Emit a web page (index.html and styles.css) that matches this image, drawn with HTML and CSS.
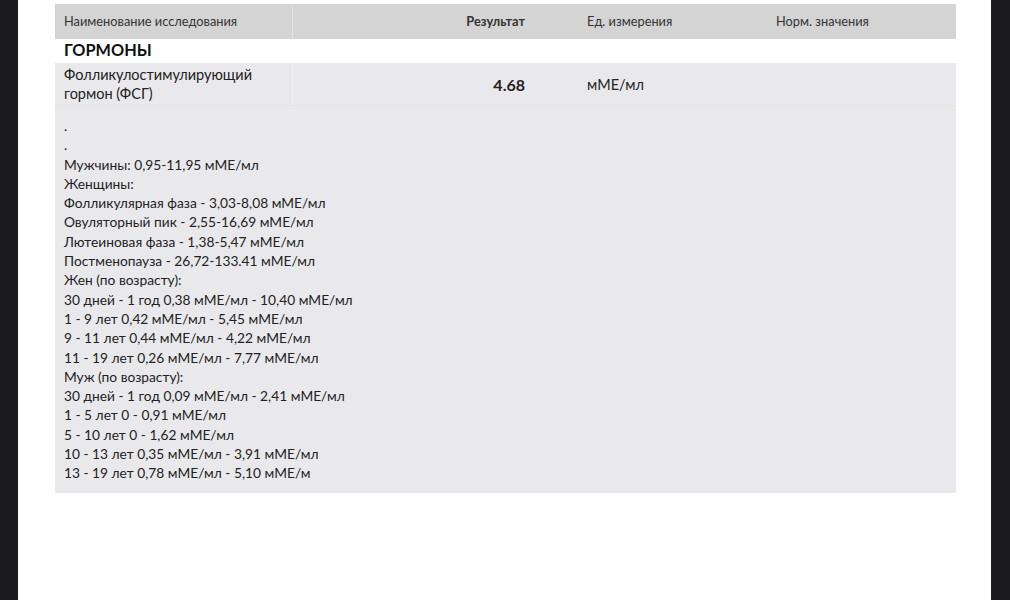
FILE: index.html
```html
<!DOCTYPE html>
<html lang="ru">
<head>
<meta charset="utf-8">
<link rel="stylesheet" href="styles.css">
</head>
<body>
<div class="frame">
  <div class="side side-left"></div>
  <main class="page">
    <div class="report">
      <div class="row row-head">
        <div class="cell c-name">Наименование исследования</div>
        <div class="cell c-result bold">Результат</div>
        <div class="cell c-unit">Ед. измерения</div>
        <div class="cell c-norm">Норм. значения</div>
      </div>
      <div class="section">ГОРМОНЫ</div>
      <div class="row row-test">
        <div class="cell c-name">Фолликулостимулирующий<br>гормон (ФСГ)</div>
        <div class="cell c-result bold">4.68</div>
        <div class="cell c-unit">мМЕ/мл</div>
        <div class="cell c-norm"></div>
      </div>
      <div class="notes">
        <div>.</div>
        <div>.</div>
        <div>Мужчины: 0,95-11,95 мМЕ/мл</div>
        <div>Женщины:</div>
        <div>Фолликулярная фаза - 3,03-8,08 мМЕ/мл</div>
        <div>Овуляторный пик - 2,55-16,69 мМЕ/мл</div>
        <div>Лютеиновая фаза - 1,38-5,47 мМЕ/мл</div>
        <div>Постменопауза - 26,72-133.41 мМЕ/мл</div>
        <div>Жен (по возрасту):</div>
        <div>30 дней - 1 год 0,38 мМЕ/мл - 10,40 мМЕ/мл</div>
        <div>1 - 9 лет 0,42 мМЕ/мл - 5,45 мМЕ/мл</div>
        <div>9 - 11 лет 0,44 мМЕ/мл - 4,22 мМЕ/мл</div>
        <div>11 - 19 лет 0,26 мМЕ/мл - 7,77 мМЕ/мл</div>
        <div>Муж (по возрасту):</div>
        <div>30 дней - 1 год 0,09 мМЕ/мл - 2,41 мМЕ/мл</div>
        <div>1 - 5 лет 0 - 0,91 мМЕ/мл</div>
        <div>5 - 10 лет 0 - 1,62 мМЕ/мл</div>
        <div>10 - 13 лет 0,35 мМЕ/мл - 3,91 мМЕ/мл</div>
        <div>13 - 19 лет 0,78 мМЕ/мл - 5,10 мМЕ/м</div>
      </div>
    </div>
  </main>
  <div class="side side-right"></div>
</div>
</body>
</html>
```

FILE: styles.css
```css
* { box-sizing: border-box; }
html, body {
  margin: 0;
  padding: 0;
  width: 1010px;
  height: 600px;
  overflow: hidden;
  font-family: Lato, "Open Sans", "Noto Sans", sans-serif;
  color: #222;
}
.frame {
  display: flex;
  height: 600px;
}
.side {
  background: #1c1c1e;
  height: 100%;
}
.side-left { width: 18px; }
.side-right { width: 19px; }
.page {
  flex: 1;
  background: #fff;
  padding: 4px 0 0 37px;
}
.report {
  width: 901px;
}
.row {
  display: grid;
  grid-template-columns: 238px 285px 189px 189px;
}
.cell {
  display: flex;
  align-items: center;
  padding-left: 9px;
}
.c-name { border-right: 1px solid rgba(255,255,255,0.3); }
.c-result {
  justify-content: flex-end;
  padding-left: 0;
  padding-right: 53px;
}
.bold { font-weight: 700; }
.row-head {
  background: #d4d4d4;
  height: 35px;
  font-size: 12.8px;
  color: #333;
}
.row-head .cell { padding-bottom: 2px; }
.section {
  height: 24px;
  display: flex;
  align-items: center;
  padding-left: 9px;
  padding-bottom: 3px;
  font-size: 16.3px;
  font-weight: 700;
  color: #111;
}
.row-test {
  background: #e9e9eb;
  height: 43px;
  font-size: 14.5px;
  line-height: 19px;
  color: #222;
  border-bottom: 1px solid #e4e4e6;
}
.row-test .c-result { font-size: 16px; color: #222; }
.notes {
  background: #e9e9eb;
  padding: 10px 9px 10px;
  font-size: 13.76px;
  line-height: 19.3px;
  color: #222;
}
```
